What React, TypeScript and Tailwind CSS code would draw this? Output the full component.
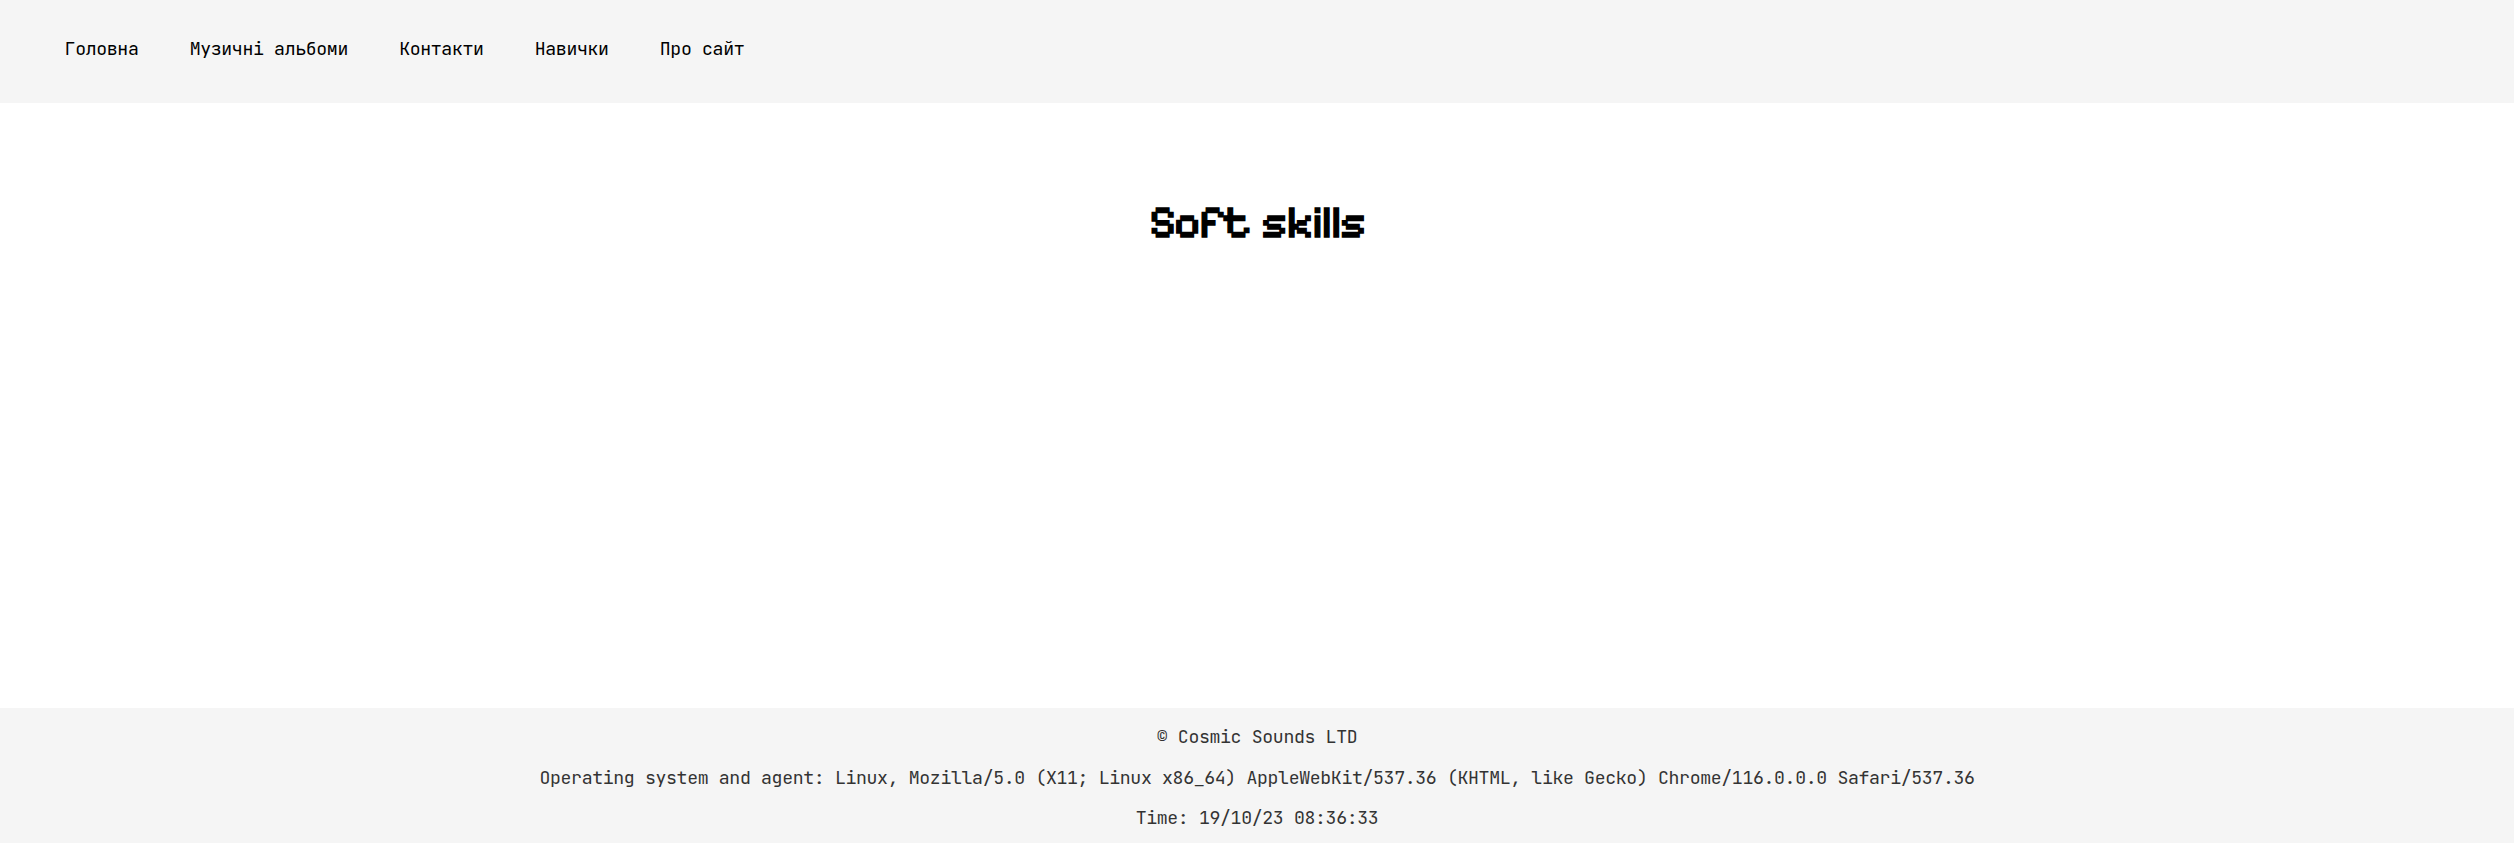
const links = ['Головна', 'Музичні альбоми', 'Контакти', 'Навички', 'Про сайт'];

const footerLines = [
  '© Cosmic Sounds LTD',
  'Operating system and agent: Linux, Mozilla/5.0 (X11; Linux x86_64) AppleWebKit/537.36 (KHTML, like Gecko) Chrome/116.0.0.0 Safari/537.36',
  'Time: 19/10/23 08:36:33',
];

export default function App() {
  return (
    <div className="flex h-[843px] flex-col bg-white font-['JetBrains_Mono','DejaVu_Sans_Mono',monospace] text-[18.2px] leading-[23px] font-[370] tracking-[-0.36px]">
      <header className="h-[103px] bg-[#f5f5f5] px-[64.6px] pt-[37px]">
        <nav>
          <ul className="flex gap-[51.2px] text-black">
            {links.map((link) => (
              <li key={link}>
                <a href="#">{link}</a>
              </li>
            ))}
          </ul>
        </nav>
      </header>
      <main className="grow pt-[94px]">
        <h1 className="pl-px text-center font-['Pixelify_Sans','DejaVu_Sans_Condensed','DejaVu_Sans',sans-serif] text-[44.8px] leading-[50px] font-normal tracking-[-0.55px] text-black [-webkit-text-stroke:1.4px_black] [word-spacing:1.6px]">
          Soft skills
        </h1>
      </main>
      <footer className="flex h-[135px] flex-col items-center gap-[17.6px] bg-[#f5f5f5] pt-[17px] text-[#333]">
        {footerLines.map((line) => (
          <p key={line} className="whitespace-nowrap">
            {line}
          </p>
        ))}
      </footer>
    </div>
  );
}
